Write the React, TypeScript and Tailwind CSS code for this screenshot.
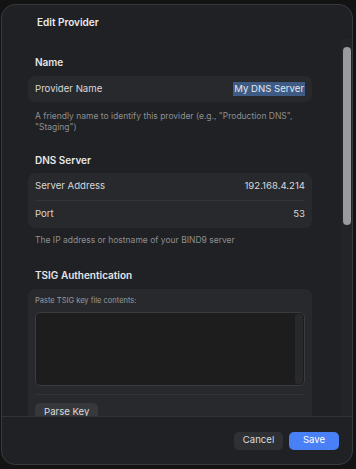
import React from 'react';

const Heading = ({ children, className = '' }: { children: React.ReactNode; className?: string }) => (
  <h3 className={`pl-[7px] text-[10px] leading-[12px] font-semibold text-[#e6e6e8] ${className}`}>{children}</h3>
);

const Row = ({ label, value }: { label: string; value: React.ReactNode }) => (
  <div className="flex h-[27px] items-center justify-between px-[7px] text-[9.6px] text-[#d8d8da]">
    <span>{label}</span>
    <span>{value}</span>
  </div>
);

export default function App() {
  return (
    <div className="h-[469px] w-[356px] bg-[#131314] pl-px pt-[4px] font-['Inter',sans-serif]">
      <div className="flex h-[461px] w-[352px] flex-col overflow-hidden rounded-[14px] border border-[#38393c] bg-[#1f2124]">
        {/* Header */}
        <div className="flex h-[34px] shrink-0 items-center pl-[35px]">
          <h2 className="text-[10px] font-semibold text-[#ececee]">Edit Provider</h2>
        </div>

        {/* Scroll area */}
        <div className="flex min-h-0 flex-1">
          <div className="min-w-0 flex-1 overflow-hidden pl-[26px] pr-[29px] pt-[17px]">
            <Heading className="mb-[8px]">Name</Heading>
            <div className="rounded-[7px] bg-[#28292c]">
              <div className="flex h-[26px] items-center justify-between px-[7px] text-[9.6px] text-[#d8d8da]">
                <span>Provider Name</span>
                <span className="bg-[#3d5b84] px-[1px] leading-[14px] text-[#e4e8ee]">My DNS Server</span>
              </div>
            </div>
            <p className="mt-[9px] pl-[7px] text-[8.5px] leading-[10.5px] text-[#8e8f92]">
              A friendly name to identify this provider (e.g., "Production DNS", "Staging")
            </p>

            <Heading className="mb-[7px] mt-[22px]">DNS Server</Heading>
            <div className="rounded-[7px] bg-[#28292c]">
              <Row label="Server Address" value="192.168.4.214" />
              <div className="mx-[7px] h-px bg-[#333437]" />
              <Row label="Port" value="53" />
            </div>
            <p className="mt-[7px] pl-[7px] text-[8.5px] leading-[10.5px] text-[#8e8f92]">
              The IP address or hostname of your BIND9 server
            </p>

            <Heading className="mb-[8px] mt-[23px]">TSIG Authentication</Heading>
            <div className="rounded-[7px] bg-[#28292c] px-[7px] pb-[10px] pt-[7px]">
              <div className="text-[7.5px] leading-[10px] text-[#9a9b9e]">Paste TSIG key file contents:</div>
              <div className="mt-[6px] flex h-[74px] overflow-hidden rounded-[5px] border border-[#3a3b3e] bg-[#1d1d1e] p-px">
                <div className="flex-1" />
                <div className="w-[8px] rounded-[3px] bg-[#28292b]" />
              </div>
              <div className="mt-[8px] h-px bg-[#333437]" />
              <button className="mt-[8px] h-[19px] rounded-[5px] bg-[#37383b] px-[9px] text-[9.6px] text-[#dcdcde]">
                Parse Key
              </button>
            </div>
          </div>

          {/* Scrollbar */}
          <div className="w-[11px] shrink-0 bg-[#222427] pl-[2px] pt-[8px]">
            <div className="h-[178px] w-[8px] rounded-full bg-[#9b9b9d]" />
          </div>
        </div>

        {/* Footer */}
        <div className="flex h-[48px] shrink-0 items-center justify-end gap-[6px] border-t border-[#323336] pr-[13px]">
          <button className="h-[18px] w-[49px] rounded-[5px] bg-[#2f3033] text-[9.6px] text-[#dcdcde]">Cancel</button>
          <button className="h-[18px] w-[50px] rounded-[5px] bg-[#4a80f6] text-[9.6px] text-white">Save</button>
        </div>
      </div>
    </div>
  );
}
